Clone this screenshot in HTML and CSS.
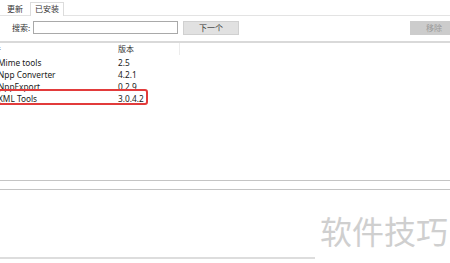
FILE: index.html
```html
<!DOCTYPE html>
<html lang="zh-CN">
<head>
    <meta charset="UTF-8">
    <meta name="viewport" content="width=device-width, initial-scale=1.0">
    <title>插件管理</title>
    <link rel="stylesheet" href="styles.css">
</head>
<body>
    <div class="window">
        <div class="tabs">
            <span class="tab">更新</span>
            <span class="tab active">已安装</span>
        </div>

        <div class="search-bar">
            <label class="search-label" for="search">搜索:</label>
            <input type="text" id="search" class="search-input">
            <button class="btn next-btn">下一个</button>
            <div class="spacer"></div>
            <button class="btn remove-btn" disabled>移除</button>
        </div>

        <div class="list">
            <div class="list-head">
                <div class="col-name">插件</div>
                <div class="col-version">版本</div>
            </div>
            <div class="list-row">
                <div class="col-name">Mime tools</div>
                <div class="col-version">2.5</div>
            </div>
            <div class="list-row">
                <div class="col-name">Npp Converter</div>
                <div class="col-version">4.2.1</div>
            </div>
            <div class="list-row">
                <div class="col-name">NppExport</div>
                <div class="col-version">0.2.9</div>
            </div>
            <div class="list-row">
                <div class="col-name">XML Tools</div>
                <div class="col-version">3.0.4.2</div>
            </div>
            <div class="highlight"></div>
        </div>

        <div class="description"></div>

        <div class="footer-line"></div>

        <div class="watermark">软件技巧</div>
    </div>
</body>
</html>
```

FILE: styles.css
```css
* {
    box-sizing: border-box;
    margin: 0;
    padding: 0;
}

body {
    width: 450px;
    height: 263px;
    overflow: hidden;
    background-color: white;
    font-family: "Noto Sans", "Noto Sans CJK SC", sans-serif;
    font-size: 8.3px;
    color: #1a1a1a;
}

.window {
    position: relative;
    height: 263px;
}

/* tabs */
.tabs {
    display: flex;
    align-items: flex-end;
    height: 16px;
    border-bottom: 1px solid #e3e3e3;
    padding-left: 3px;
}

.tab {
    font-family: "Noto Sans CJK SC", sans-serif;
    font-size: 8px;
    line-height: 11px;
    padding: 0 4px 1px;
    color: #333;
}

.tab.active {
    background-color: white;
    border: 1px solid #dcdcdc;
    border-bottom: none;
    margin-left: 3px;
    margin-bottom: -1px;
    padding: 0 4px 2px;
    line-height: 11px;
}

/* search */
.search-bar {
    display: flex;
    align-items: center;
    height: 25px;
    padding-left: 12px;
    padding-bottom: 2px;
}

.search-label {
    font-family: "Noto Sans CJK SC", sans-serif;
    font-size: 8px;
    color: #333;
    width: 21px;
}

.search-input {
    width: 145px;
    height: 13px;
    border: 1px solid #a9a9a9;
    background-color: white;
}

.btn {
    font-family: "Noto Sans CJK SC", sans-serif;
    font-size: 8px;
    height: 14px;
    border: 1px solid #d0d0d0;
    background-color: #e1e1e1;
    color: #333;
}

.next-btn {
    width: 56px;
    margin-left: 5px;
}

.spacer {
    flex: 1;
}

.remove-btn {
    width: 42px;
    margin-right: -2px;
    background-color: #cccccc;
    border-color: #cccccc;
    color: #9a9a9a;
    padding-left: 6px;
}

/* list */
.list {
    position: relative;
    height: 140px;
    border-top: 2px solid #d9d9d9;
    border-bottom: 1px solid #c4c4c4;
    margin-left: -15px;
}

.list-head, .list-row {
    display: flex;
    height: 12px;
    line-height: 12px;
}

.list-head {
    font-family: "Noto Sans CJK SC", sans-serif;
    font-size: 8px;
    color: #333;
}

.list-head .col-version {
    border-right: 1px solid #ececec;
}

.list-row .col-name {
    padding-left: 13px;
}

.col-name {
    width: 133px;
    white-space: nowrap;
}

.col-version {
    width: 62px;
}

.list-head + .list-row {
    margin-top: 2px;
}

.highlight {
    position: absolute;
    left: 13px;
    top: 46px;
    width: 150px;
    height: 16px;
    border: 2px solid #e23b3b;
    border-radius: 3px;
}

/* description */
.description {
    height: 68px;
    margin-top: 8px;
    border-top: 1px solid #c4c4c4;
}

.footer-line {
    width: 315px;
    height: 2px;
    background-color: #dddddd;
}

.watermark {
    position: absolute;
    left: 320px;
    top: 210px;
    font-family: "Noto Sans CJK SC", sans-serif;
    font-size: 32px;
    line-height: 40px;
    color: #cfcfcf;
}
```
